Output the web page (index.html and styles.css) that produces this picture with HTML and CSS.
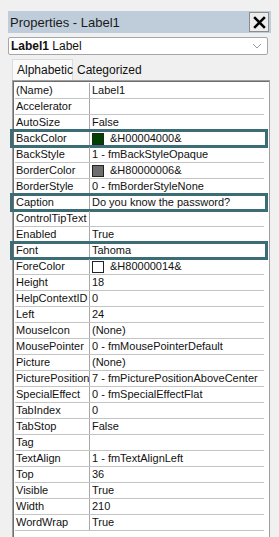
FILE: index.html
```html
<!DOCTYPE html>
<html>
<head>
<meta charset="utf-8">
<link rel="stylesheet" href="styles.css">
</head>
<body>
<div class="window">
  <div class="titlebar">
    <span class="title">Properties - Label1</span>
    <span class="close"><svg width="15" height="15" viewBox="0 0 14 14"><path d="M2 2 L12 12 M12 2 L2 12" stroke="#000" stroke-width="2.4" fill="none"/></svg></span>
  </div>
  <div class="combo">
    <span class="combo-text"><b>Label1</b> Label</span>
    <svg class="chev" width="10" height="6" viewBox="0 0 10 6"><path d="M1 1 L5 5 L9 1" stroke="#9a9a9a" stroke-width="1" fill="none"/></svg>
  </div>
  <div class="tabs">
    <span class="tab active">Alphabetic</span>
    <span class="tab">Categorized</span>
  </div>
  <div class="grid">
    <div class="row"><span class="name">(Name)</span><span class="val">Label1</span></div>
    <div class="row"><span class="name">Accelerator</span><span class="val"></span></div>
    <div class="row"><span class="name">AutoSize</span><span class="val">False</span></div>
    <div class="row hl"><span class="name">BackColor</span><span class="val"><i class="sw green"></i>&amp;H00004000&amp;</span></div>
    <div class="row"><span class="name">BackStyle</span><span class="val">1 - fmBackStyleOpaque</span></div>
    <div class="row"><span class="name">BorderColor</span><span class="val"><i class="sw grey"></i>&amp;H80000006&amp;</span></div>
    <div class="row"><span class="name">BorderStyle</span><span class="val">0 - fmBorderStyleNone</span></div>
    <div class="row hl"><span class="name">Caption</span><span class="val">Do you know the password?</span></div>
    <div class="row"><span class="name">ControlTipText</span><span class="val"></span></div>
    <div class="row"><span class="name">Enabled</span><span class="val">True</span></div>
    <div class="row hl"><span class="name">Font</span><span class="val">Tahoma</span></div>
    <div class="row"><span class="name">ForeColor</span><span class="val"><i class="sw white"></i>&amp;H80000014&amp;</span></div>
    <div class="row"><span class="name">Height</span><span class="val">18</span></div>
    <div class="row"><span class="name">HelpContextID</span><span class="val">0</span></div>
    <div class="row"><span class="name">Left</span><span class="val">24</span></div>
    <div class="row"><span class="name">MouseIcon</span><span class="val">(None)</span></div>
    <div class="row"><span class="name">MousePointer</span><span class="val">0 - fmMousePointerDefault</span></div>
    <div class="row"><span class="name">Picture</span><span class="val">(None)</span></div>
    <div class="row"><span class="name">PicturePosition</span><span class="val">7 - fmPicturePositionAboveCenter</span></div>
    <div class="row"><span class="name">SpecialEffect</span><span class="val">0 - fmSpecialEffectFlat</span></div>
    <div class="row"><span class="name">TabIndex</span><span class="val">0</span></div>
    <div class="row"><span class="name">TabStop</span><span class="val">False</span></div>
    <div class="row"><span class="name">Tag</span><span class="val"></span></div>
    <div class="row"><span class="name">TextAlign</span><span class="val">1 - fmTextAlignLeft</span></div>
    <div class="row"><span class="name">Top</span><span class="val">36</span></div>
    <div class="row"><span class="name">Visible</span><span class="val">True</span></div>
    <div class="row"><span class="name">Width</span><span class="val">210</span></div>
    <div class="row"><span class="name">WordWrap</span><span class="val">True</span></div>
  </div>
</div>
</body>
</html>
```
FILE: styles.css
```css
html, body {
  margin: 0;
  padding: 0;
  background: #f0f0f0;
  overflow: hidden;
  height: 537px;
}
body {
  font-family: "Liberation Sans", Arial, sans-serif;
  color: #111;
}
.window {
  margin: 11px 0 0 8px;
  width: 263px;
}
.titlebar {
  height: 22px;
  background: #bfcddb;
  display: flex;
  align-items: center;
  justify-content: space-between;
}
.title {
  font-size: 13px;
  padding-left: 2px;
  color: #1a1a1a;
}
.close {
  width: 18px;
  height: 18px;
  margin-right: 2px;
  border: 1px solid #8c8c8c;
  background: #ececec;
  display: flex;
  align-items: center;
  justify-content: center;
}
.combo {
  margin-top: 4px;
  width: 258px;
  height: 16px;
  border: 1px solid #a6a6a6;
  border-radius: 2px;
  background: #fff;
  display: flex;
  align-items: center;
  justify-content: space-between;
  font-size: 12px;
}
.combo-text { padding-left: 2px; }
.chev { margin-right: 5px; }
.tabs {
  margin: 4px 0 0 4px;
  height: 21px;
  display: flex;
  align-items: flex-end;
}
.tab {
  font-size: 12px;
  height: 19px;
  line-height: 18px;
  padding: 0 4px;
  box-sizing: border-box;
}
.tab.active {
  background: #fafafa;
  border: 1px solid #dcdcdc;
  border-bottom: none;
  width: 61px;
  height: 21px;
  line-height: 20px;
}
.grid {
  margin-left: 4px;
  width: 252px;
  height: 470px;
  border: 1px solid #a0a0a0;
  box-shadow: inset 1px 1px 0 #6e6e6e;
  background: #fff;
  padding: 2px 2px 0 2px;
  font-size: 11px;
}
.row {
  position: relative;
  height: 16px;
  box-sizing: border-box;
  border-bottom: 1px solid #c4c4c4;
  display: flex;
  align-items: center;
  width: 249px;
}
.name {
  width: 75px;
  height: 15px;
  line-height: 15px;
  box-sizing: border-box;
  padding-left: 1px;
  border-right: 1px solid #a8a8a8;
  white-space: nowrap;
  overflow: hidden;
}
.val {
  flex: 1;
  padding-left: 2px;
  line-height: 15px;
  display: flex;
  align-items: center;
  white-space: nowrap;
}
.sw {
  display: inline-block;
  width: 10px;
  height: 10px;
  border: 1px solid #222;
  margin-right: 6px;
}
.sw.green { background: #004000; }
.sw.grey { background: #6d6d6d; }
.sw.white { background: #fff; }
.row.hl::after {
  content: "";
  position: absolute;
  left: -5px;
  right: -4px;
  top: -2px;
  bottom: -2px;
  border: 3px solid #3c6d76;
}
```
